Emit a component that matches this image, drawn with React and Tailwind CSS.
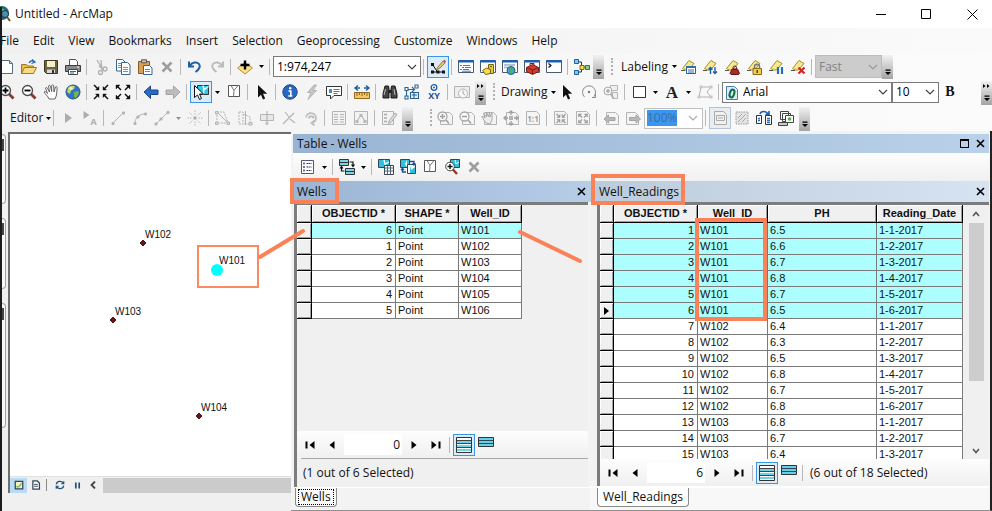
import { clsx } from 'clsx';

const WELLS = [
  { id: 6, shape: 'Point', well: 'W101' },
  { id: 1, shape: 'Point', well: 'W102' },
  { id: 2, shape: 'Point', well: 'W103' },
  { id: 3, shape: 'Point', well: 'W104' },
  { id: 4, shape: 'Point', well: 'W105' },
  { id: 5, shape: 'Point', well: 'W106' },
];

const READINGS = [
  [1, 'W101', '6.5', '1-1-2017'],
  [2, 'W101', '6.6', '1-2-2017'],
  [3, 'W101', '6.7', '1-3-2017'],
  [4, 'W101', '6.8', '1-4-2017'],
  [5, 'W101', '6.7', '1-5-2017'],
  [6, 'W101', '6.5', '1-6-2017'],
  [7, 'W102', '6.4', '1-1-2017'],
  [8, 'W102', '6.3', '1-2-2017'],
  [9, 'W102', '6.5', '1-3-2017'],
  [10, 'W102', '6.8', '1-4-2017'],
  [11, 'W102', '6.7', '1-5-2017'],
  [12, 'W102', '6.8', '1-6-2017'],
  [13, 'W103', '6.8', '1-1-2017'],
  [14, 'W103', '6.7', '1-2-2017'],
  [15, 'W103', '6.4', '1-3-2017'],
];

const MENUS = ['File', 'Edit', 'View', 'Bookmarks', 'Insert', 'Selection', 'Geoprocessing', 'Customize', 'Windows', 'Help'];

/* ---------- icon fragments ---------- */

const g = '#b4b4b4';

const tag = (
  <>
    <path d="M2.5 9.5 9 1.5l5 3-5.5 6.5H5z" fill="#f3e27a" stroke="#a8922c" />
    <path d="M5 9l5-6M7 10l5-6" stroke="#fff8c8" strokeWidth=".8" />
    <path d="M1 11.5h4" stroke="#555" />
  </>
);

const windowFrame = (
  <>
    <path d="M.5 1.5h15v12H.5z" fill="#fff" stroke="#4a5a70" />
    <path d="M.5 1h15v2.5H.5z" fill="#1d5fae" />
  </>
);

const greyPage = <path d="M3.5 2.5h9l3 3v9h-12z" fill="#f4f4f4" stroke={g} />;

const ICONS = {
  newDoc: <path d="M2.5 1.5h8l3 3v10h-11zM10.5 1.5v3h3" fill="#fff" stroke="#5b6b80" />,
  open: (
    <>
      <path d="M.5 14.5v-9h5l1 1.5h6v7.500z" fill="#e6bf52" stroke="#a37a1e" />
      <path d="M.5 14.500 3.500 8.500h12l-3 6z" fill="#f8dc84" stroke="#a37a1e" />
      <path d="M8 4c1-2 3-2.500 5-1.500M11 .5l3 2.500-3.500 1.500" fill="none" stroke="#1d6bb5" strokeWidth="1.300" />
    </>
  ),
  save: (
    <>
      <path d="M1.500 1.500h13v13h-11l-2-2z" fill="#6b6440" stroke="#3b3722" />
      <path d="M4 2h8v6H4z" fill="#f3efcf" />
      <path d="M4 10.500h8V14H4z" fill="#d9d9d9" />
      <path d="M9 11h2v3H9z" fill="#333" />
    </>
  ),
  print: (
    <>
      <path d="M4.500 6V.5h6l2 2V6" fill="#fff" stroke="#555" />
      <path d="M.5 6.500h15v6H.5z" fill="#8a8a8a" stroke="#3c3c3c" />
      <path d="M3.500 10.500h9v5h-9z" fill="#fff" stroke="#444" />
      <path d="M5 12.500h6M5 14h4" stroke="#1d6bb5" />
      <path d="M12 8h2" stroke="#fff" />
    </>
  ),
  cut: (
    <g fill="none" stroke="#b0b0b0" strokeWidth="1.300">
      <path d="M4 1l6 10M8 1l1 10M6 7l5 4" />
      <circle cx="12" cy="10" r="2" />
      <circle cx="7.500" cy="13.500" r="2" />
    </g>
  ),
  copy: (
    <>
      <path d="M1.500.5h6l2.500 2.500v9H1.500z" fill="#fff" stroke="#3a6590" />
      <path d="M6.500 3.500h6l2.500 2.500v9.500H6.500z" fill="#fff" stroke="#3a6590" />
      <path d="M8 8.500h5M8 10.500h5M8 12.500h5M3 4.500h3M3 6.500h3M3 8.500h3" stroke="#5b9bd0" />
    </>
  ),
  paste: (
    <>
      <path d="M1.500 2.500h11v12h-11z" fill="#d9a05a" stroke="#8a5a1e" />
      <path d="M4.500.8h5v3h-5z" fill="#c8c8c8" stroke="#555" />
      <path d="M6.500 6.500h6l2.500 2.500v6.500H6.500z" fill="#fff" stroke="#3a6590" />
      <path d="M8 10.500h5M8 12.500h5" stroke="#4a90d0" />
    </>
  ),
  deleteX: <path d="M3.500 3.500l9 9M12.500 3.500l-9 9" stroke="#9e9e9e" strokeWidth="2.600" />,
  undo: <path d="M2 2.500v5h5M2.500 7C5 3 10 2.500 12 5s0 5.500-3.500 8" fill="none" stroke="#1d5fa5" strokeWidth="2" />,
  redo: <path d="M14 2.500v5H9M13.500 7C11 3 6 2.500 4 5s0 5.500 3.500 8" fill="none" stroke="#bcbcbc" strokeWidth="2" />,
  addData: (
    <>
      <path d="M8 3.500 15.500 9 8 15 .5 9z" fill="#ffe08a" stroke="#b8912e" />
      <path d="M8 1.500v9M3.500 6h9" stroke="#000" strokeWidth="2.400" />
    </>
  ),
  editSketch: (
    <>
      <path d="M2.500 5.500l5 7.500M2 13h12" fill="none" stroke="#111" />
      <path d="M1 4h3v3H1zM1 11.500h3v3H1zM6.500 11.500h3v3h-3zM12 11.500h3v3h-3z" fill="#111" />
      <path d="M7.500 8.500 13 2l2 2-5.500 5.500-3 1z" fill="#e8c070" stroke="#8a6a2a" strokeWidth=".8" />
      <path d="M13 2l1.500-1.500 1.500 2L15 4z" fill="#c05a6a" />
    </>
  ),
  toc: (
    <>
      {windowFrame}
      <path d="M2 6.500h2M5 6.500h7M4 8.500h2M7 8.500h6M2 10.500h2M5 10.500h6M4 12.200h9" stroke="#3d7fc4" />
    </>
  ),
  catalog: (
    <>
      {windowFrame}
      <path d="M8.500 5.500h5v9h-5z" fill="#e8c832" stroke="#7a6410" />
      <path d="M2.500 11.500l4-2.500 4 1.500v4l-5 1z" fill="#f5dc4c" stroke="#7a6410" />
      <path d="M10 7.500h2" stroke="#7a6410" />
    </>
  ),
  search: (
    <>
      {windowFrame}
      <path d="M2 6h11M2 8.500h4" stroke="#9ab0c8" strokeWidth="1.500" />
      <circle cx="9" cy="11.500" r="4" fill="#4aa0d8" stroke="#235a80" />
      <path d="M7 9.500l3-1 1 3-2 3-2-2z" fill="#4caf50" />
    </>
  ),
  toolbox: (
    <>
      {windowFrame}
      <path d="M2.500 8.500l6-3 6 3v4l-6 3-6-3z" fill="#d23a30" stroke="#7c1a14" />
      <path d="M2.500 8.500l6 2.500 6-2.500M8.500 11v4" fill="none" stroke="#7c1a14" />
      <path d="M6 6V4.500h4V6" fill="none" stroke="#7c1a14" />
    </>
  ),
  python: (
    <>
      {windowFrame}
      <path d="M2.500 4.500l2.500 2-2.500 2" fill="none" stroke="#111" strokeWidth="1.200" />
    </>
  ),
  model: (
    <>
      <path d="M5 3h2.500v10H5M7.500 8H13" fill="none" stroke="#333" />
      <path d="M.5.500h4v4h-4z" fill="#8ec5f0" stroke="#1d5fa5" />
      <path d="M.5 11.500h4v4h-4z" fill="#8ec5f0" stroke="#1d5fa5" />
      <path d="M6 6.500h4v4H6z" fill="#f5e04c" stroke="#7a6a10" />
      <path d="M11.500 6.500h4v4h-4z" fill="#8ad08a" stroke="#2a7a2a" />
    </>
  ),
  labelManager: (
    <>
      {tag}
      <path d="M6.500 7.500h9v7h-9z" fill="#fff" stroke="#2c5f94" />
      <path d="M6 7h10v2H6z" fill="#2c6fb4" />
      <path d="M8 11h6M8 13h6" stroke="#2c6fb4" />
    </>
  ),
  labelPriority: (
    <>
      {tag}
      <path d="M8.500 15V8.500M6.500 10.500l2-2 2 2M13 8v6.500M11 12.500l2 2 2-2" fill="none" stroke="#1d5fa5" strokeWidth="1.400" />
    </>
  ),
  labelWeight: (
    <>
      {tag}
      <path d="M8 10h5.500l2 4.500-1 1H7l-1-1z" fill="#a82c24" stroke="#6a1410" />
      <circle cx="10.800" cy="8.800" r="1.800" fill="none" stroke="#6a1410" />
    </>
  ),
  labelLock: (
    <>
      {tag}
      <path d="M8.500 10V7.500c0-3 5-3 5 0V10" fill="none" stroke="#777" strokeWidth="1.500" />
      <path d="M7 9.500h8.500v6H7z" fill="#f0cc50" stroke="#8a6a14" />
      <path d="M11.200 11v3" stroke="#5a4408" strokeWidth="1.500" />
    </>
  ),
  labelPause: (
    <>
      {tag}
      <path d="M10 8v7M14 8v7" stroke="#2470b8" strokeWidth="2.200" />
    </>
  ),
  labelUnplaced: (
    <>
      {tag}
      <path d="M8.500 8.500l6 6M14.500 8.500l-6 6" stroke="#d02828" strokeWidth="2.200" />
    </>
  ),
  zoomIn: (
    <>
      <path d="M9.500 9.500l5 5" stroke="#8a3a2a" strokeWidth="2.800" />
      <circle cx="6.500" cy="6.500" r="5" fill="#fff" stroke="#4a4a4a" strokeWidth="1.300" />
      <path d="M6.500 3.500v6M3.500 6.500h6" stroke="#000" strokeWidth="1.800" />
    </>
  ),
  zoomOut: (
    <>
      <path d="M9.500 9.500l5 5" stroke="#8a3a2a" strokeWidth="2.800" />
      <circle cx="6.500" cy="6.500" r="5" fill="#fff" stroke="#4a4a4a" strokeWidth="1.300" />
      <path d="M3.500 6.500h6" stroke="#000" strokeWidth="1.800" />
    </>
  ),
  hand: (
    <path
      d="M6 15c-1-3-4-5-5-7 1-1 2 0 3.500 1.500L2.500 4c.5-1 1.500-.5 2 .5L6.500 8 5.500 2c.5-1 1.700-.8 2 .3L8.700 7.500V1.500c.5-1 1.800-.8 2 .2L11 8l1.500-5c.5-.8 1.800-.4 1.700.6L13.500 11c-.3 1.500-1 2.500-1.500 4z"
      fill="#fff"
      stroke="#555"
      strokeWidth=".9"
    />
  ),
  globe: (
    <>
      <circle cx="8" cy="8" r="7" fill="#2f74c8" stroke="#2a5484" />
      <path d="M3 4c2-3 6-2.500 7-1.500L9 5 6 6.500 5 10 2 8z" fill="#b8d870" />
      <path d="M9 8l4-1 1 2-3 5-2-1z" fill="#79b34a" />
      <circle cx="6" cy="4.500" r="1.800" fill="#fff" opacity=".6" />
    </>
  ),
  fixedIn: (
    <g fill="#111" stroke="#111">
      <path d="M1 1l4 4M15 1l-4 4M1 15l4-4M15 15l-4-4" strokeWidth="1.500" />
      <path d="M6 2.500V6H2.500zM10 2.500V6h3.500zM6 13.500V10H2.500zM10 13.500V10h3.500z" strokeWidth=".4" />
    </g>
  ),
  fixedOut: (
    <g fill="#111" stroke="#111">
      <path d="M2 2l4 4M14 2l-4 4M2 14l4-4M14 14l-4-4" strokeWidth="1.500" />
      <path d="M1 1v4l4-4zM15 1v4l-4-4zM1 15v-4l4 4zM15 15v-4l-4 4z" strokeWidth=".4" />
    </g>
  ),
  back: <path d="M1 8l6.500-6v4H15v4.500H7.500v4z" fill="#2a6cc4" stroke="#1a4688" />,
  forward: <path d="M15 8 8.500 2v4H1v4.500h7.500v4z" fill="#bdbdbd" stroke="#a5a5a5" />,
  selectFeatures: (
    <>
      <path d="M4.500 1.500h11v9h-11z" fill="#30c8e8" stroke="#333" />
      <path d="M10 1.500l1 4 4.500-3M11 5.500l-1 5" fill="none" stroke="#fff" strokeWidth="1.400" />
      <path d="M1.500 1.500v12l3-2.500 2 4.500 2-1-2-4.500h4z" fill="#fff" stroke="#111" />
    </>
  ),
  clearSelection: (
    <>
      <path d="M2.500 1.500h11v11h-11z" fill="#fff" stroke="#555" />
      <path d="M5 1.500l3 5 4-5M8 6.500l-.5 6" fill="none" stroke="#777" />
    </>
  ),
  arrow: <path d="M4 1v12.500l3-2.800 2 4.800 2.200-1L9 9.800h4.200z" fill="#111" />,
  info: (
    <>
      <circle cx="8" cy="8" r="7.200" fill="#2868c0" stroke="#1a4484" />
      <path d="M6.500 7h2.300v5M6.300 12h4" fill="none" stroke="#fff" strokeWidth="1.600" />
      <circle cx="8.200" cy="4.200" r="1.200" fill="#fff" />
    </>
  ),
  hyperlink: <path d="M10 1 3.500 8.500H7L4 15.500l8.500-9H9L12.500 1z" fill="#c6c6c6" stroke="#aaa" strokeWidth=".8" />,
  htmlPopup: (
    <>
      <path d="M.5 2.500h15v9H8l-3.500 3.500v-3.500h-4z" fill="#fff" stroke="#333" />
      <path d="M3 5h3v4H3z" fill="#3d8fd0" />
      <path d="M7.500 5.500h6M7.500 7.500h6M7.500 9.500h4" stroke="#3d7fc4" />
    </>
  ),
  measure: (
    <>
      <path d="M.5 8.500h15v6H.5z" fill="#f2c76a" stroke="#94681a" />
      <path d="M3 9v3M5.500 9v2M8 9v3M10.500 9v2M13 9v3" stroke="#94681a" />
      <path d="M1 4h5M10 4h5M4 1.500 1 4l3 2.500M12 1.500 15 4l-3 2.500" fill="none" stroke="#1d5fa5" strokeWidth="1.400" />
    </>
  ),
  find: (
    <>
      <path d="M3 2h3.500l.5 3v9H1v-4zM13 2H9.500L9 5v9h6v-4z" fill="#444" stroke="#1a1a1a" />
      <path d="M6.500 6h3v3h-3z" fill="#222" />
      <path d="M3.500 5l-1.500 6M12 5l1 6" stroke="#bbb" />
    </>
  ),
  findRoute: (
    <g fill="none" stroke="#2a6494" strokeWidth="1.100">
      <path d="M2.500 12V5.500h7M8 3l2.500 2.500L8 8" />
      <path d="M6.500 8.500h8v6h-8z" fill="#e8f0f8" />
      <path d="M11 1h3v3h-3zM1 12h3v3H1zM8 11h5M10 8.500v6" />
      <path d="M1 3.500h3v3H1z" fill="#fff" />
    </g>
  ),
  goToXY: (
    <>
      <circle cx="8" cy="3.500" r="2.800" fill="#fff" stroke="#1d5fa5" strokeWidth="1.300" />
      <circle cx="8" cy="3.500" r="1" fill="#1d5fa5" />
      <text x="8" y="15" textAnchor="middle" fontSize="9" fontWeight="700" fill="#1d4f8f">XY</text>
    </>
  ),
  timeSlider: (
    <>
      <path d="M.5 2.500h15v11H.5z" fill="#eee" stroke={g} />
      <circle cx="9" cy="9.500" r="4.500" fill="#f8f8f8" stroke={g} />
      <path d="M9 6.500v3l2 1.500" fill="none" stroke="#a0a0a0" />
    </>
  ),
  rotate: (
    <>
      <path d="M3.500 13A6.500 6.500 0 1 1 13 12.500M14.500 10v3.500H11" fill="none" stroke="#8a8a8a" />
      <circle cx="8" cy="8" r="1.200" fill="#777" />
    </>
  ),
  zoomSelected: (
    <>
      <path d="M7.500 1.500h7v5h-7zM9.500 8.500h5v6h-5z" fill="#f0f0f0" stroke={g} />
      <circle cx="5" cy="7" r="4" fill="#f6f6f6" stroke="#a8a8a8" />
      <path d="M5 5v4M3 7h4M7.500 10l3 4" stroke="#a8a8a8" strokeWidth="1.400" />
    </>
  ),
  rectangle: <path d="M2.500 2.500h12v11h-12z" fill="#fff" stroke="#333" />,
  letterA: (
    <text x="8" y="14" textAnchor="middle" fontFamily="Liberation Serif, serif" fontSize="17" fontWeight="700" fill="#222">A</text>
  ),
  editVertices: (
    <>
      <path d="M2 13 4 3h10l-4 5 4 5z" fill="none" stroke={g} />
      <path d="M2.500 1.500h3v3h-3zM12.500 1.500h3v3h-3zM.5 11.500h3v3h-3zM12.500 11.500h3v3h-3z" fill="#c8c8c8" />
    </>
  ),
  editTool: <path d="M5 3v10l7-5z" fill="#adadad" />,
  editAnno: (
    <>
      <path d="M1.500 1v8l6-4z" fill="#adadad" />
      <text x="11.500" y="14.500" textAnchor="middle" fontSize="9" fontWeight="700" fill="#adadad">A</text>
    </>
  ),
  segment: (
    <g fill={g} stroke={g}>
      <path d="M3 13 13 3" />
      <path d="M2 12.500h2v2H2zM12.500 2h2v2h-2z" />
    </g>
  ),
  arc: (
    <g stroke={g}>
      <path d="M3 13c0-5 4-9 10-9" fill="none" />
      <path d="M2 12.500h2v2H2zM12.500 3h2v2h-2zM5 6h2v2H5z" fill={g} />
    </g>
  ),
  trace: (
    <g stroke={g}>
      <path d="M2 14 14 2" fill="none" />
      <path d="M1 13h2v2H1zM13 1.500h2v2h-2zM6 8h2v2H6z" fill={g} />
    </g>
  ),
  point: (
    <>
      <path d="M8 .5v4M8 11.500v4M.5 8h4M11.500 8h4M2.500 2.500l3 3M13.500 2.500l-3 3M2.500 13.500l3-3M13.500 13.500l-3-3" stroke={g} strokeDasharray="1.500 1" />
      <path d="M6.500 6.500h3v3h-3z" fill="#aaa" />
    </>
  ),
  reshape: (
    <g stroke={g} fill="none">
      <path d="M2 2v11M2 2h7l4 11H2" strokeDasharray="2 1" />
      <path d="M3 3l9 9" />
      <path d="M.5 1.500h2.500v2.500H.5zM.5 12h2.500v2.500H.5zM12 12h2.500v2.500H12z" fill="#ddd" />
    </g>
  ),
  cutPolygons: (
    <g stroke={g} fill="none">
      <path d="M2 2h4v12H2zM6 4l7 3v7H6" strokeDasharray="2 1" />
      <path d="M12 12.500h3v2.500h-3z" fill="#ddd" />
      <path d="M8.500 1v14" />
    </g>
  ),
  split: (
    <>
      <path d="M1.500 4.500h13v6h-13z" fill="#e8e8e8" stroke={g} />
      <path d="M8 1v14" stroke="#aaa" />
      <path d="M6.500 12h3v3h-3z" fill="#c4c4c4" />
    </>
  ),
  splitLine: <path d="M2 14 13 3M4 2l4 5M9 9l5 4" stroke={g} fill="none" strokeWidth="1.200" />,
  rotateTool: <path d="M3 7.500a5 5 0 1 1 6 5.500M11.500 10.500 8.500 13l3 2.500M6 8.500c0-3 4.500-3 4.500 0" fill="none" stroke="#bdbdbd" strokeWidth="1.800" />,
  attributes: (
    <>
      <path d="M1.500 1.500h13v13h-13z" fill="#f2f2f2" stroke={g} />
      <path d="M3 4.500h4M9 4.500h4M3 7h4M9 7h4M3 9.500h4M9 9.500h4M3 12h4M9 12h4" stroke={g} />
    </>
  ),
  sketchProps: (
    <>
      <path d="M1.500 1.500h13v13h-13z" fill="#f2f2f2" stroke={g} />
      <path d="M4 11l4-6 4 6" fill="none" stroke="#aaa" />
      <path d="M2.500 10h3v3h-3zM6.500 4h3v3h-3zM10.500 10h3v3h-3z" fill="#b8b8b8" />
    </>
  ),
  createFeatures: (
    <>
      <path d="M1.500 1.500h11v13h-11z" fill="#f2f2f2" stroke={g} />
      <path d="M3 4.500h3M3 8h3M3 11.500h3" stroke="#aaa" strokeWidth="1.600" />
      <path d="M8 11l6-8 2 1.500-6 8-2.500 1z" fill="#ddd" stroke="#aaa" />
    </>
  ),
  pageZoomIn: (
    <>
      {greyPage}
      <circle cx="5.500" cy="6.500" r="4.500" fill="#f8f8f8" stroke="#a8a8a8" strokeWidth="1.300" />
      <path d="M5.500 4v5M3 6.500h5M9 10l3 3.500" stroke="#a0a0a0" strokeWidth="1.500" />
    </>
  ),
  pageZoomOut: (
    <>
      {greyPage}
      <circle cx="5.500" cy="6.500" r="4.500" fill="#f8f8f8" stroke="#a8a8a8" strokeWidth="1.300" />
      <path d="M3 6.500h5M9 10l3 3.500" stroke="#a0a0a0" strokeWidth="1.500" />
    </>
  ),
  pagePan: (
    <>
      {greyPage}
      <path d="M5 13C3 10 1 8 1 6l3 2-1.500-5L5.500 7l0-5 2 5 1-5 .5 5 2-4v7l-2 4z" fill="#eee" stroke="#a8a8a8" />
    </>
  ),
  pageWhole: (
    <>
      {greyPage}
      <path d="M8 1v4M8 11v4M1 8h4M11 8h4M6 3l2-2 2 2M6 13l2 2 2-2M3 6 1 8l2 2M13 6l2 2-2 2" fill="none" stroke="#a0a0a0" strokeWidth="1.300" />
      <path d="M6 6h4v4H6z" fill="#b4b4b4" />
    </>
  ),
  pageActual: (
    <>
      <path d="M1.500 1.500h10l3 3v10h-13z" fill="#f4f4f4" stroke={g} />
      <text x="8" y="12" textAnchor="middle" fontSize="8" fontWeight="700" fill="#a0a0a0">1:1</text>
    </>
  ),
  pageFixedIn: (
    <>
      <path d="M1.500 1.500h10l3 3v10h-13z" fill="#f4f4f4" stroke={g} />
      <path d="M7 4.500V7.500H4zM9 4.500V7.500h3zM7 12.500V9.500H4zM9 12.500V9.500h3z" fill="#9c9c9c" stroke="#9c9c9c" strokeWidth=".6" />
      <path d="M3.500 4l2 2M12.500 4l-2 2M3.500 13l2-2M12.500 13l-2-2" stroke="#9c9c9c" strokeWidth="1.200" />
    </>
  ),
  pageFixedOut: (
    <>
      <path d="M1.500 1.500h10l3 3v10h-13z" fill="#f4f4f4" stroke={g} />
      <path d="M3.500 4v3l3-3zM12.500 4v3l-3-3zM3.500 13v-3l3 3zM12.500 13v-3l-3 3z" fill="#9c9c9c" stroke="#9c9c9c" strokeWidth=".6" />
      <path d="M5 5.500l2 2M11 5.500l-2 2M5 11.500l2-2M11 11.500l-2-2" stroke="#9c9c9c" strokeWidth="1.200" />
    </>
  ),
  pageBack: (
    <>
      {greyPage}
      <path d="M1 9l4.500-4v2.500H12v3H5.500V13z" fill="#b8b8b8" stroke="#a4a4a4" />
    </>
  ),
  pageForward: (
    <>
      <path d="M1.500 2.500h9l3 3v9h-12z" fill="#f4f4f4" stroke={g} />
      <path d="M15.500 9 11 5v2.500H4.500v3H11V13z" fill="#b8b8b8" stroke="#a4a4a4" />
    </>
  ),
  draftMode: (
    <>
      <path d="M2.500 1.500h9l3 3v10h-12z" fill="#f0f0f0" stroke="#aaa" />
      <path d="M4.500 5.500h8v5h-8zM6 8h5" fill="none" stroke="#aaa" />
    </>
  ),
  focusFrame: (
    <>
      <path d="M2 2h12v12H2z" fill="#e4e4e4" stroke="#999" strokeDasharray="1.500 1" />
      <path d="M4 12l8-8M4 8l4-4M8 12l4-4" stroke="#aaa" />
    </>
  ),
  changeLayout: (
    <>
      <path d="M.5 5.500h5v8h-5zM9.500 5.500h6v9h-6z" fill="#fff" stroke="#333" />
      <path d="M2 8.500h2M2 10.500h2M11 8.500h3M11 10.500h3M11 12.500h3" stroke="#2c74b8" strokeWidth="1.300" />
      <path d="M4 4c1-3 6-3.500 8 0M13 1v3.500H9.500" fill="none" stroke="#1d5fa5" strokeWidth="1.600" />
    </>
  ),
  pageSeries: (
    <>
      <path d="M2.500 1.500h8v8h-8zM4.500 3.500h8v8h-8z" fill="#fff" stroke="#444" />
      <path d="M7.500 5.500h8v7h-8z" fill="#fff" stroke="#444" />
      <circle cx="11.500" cy="9" r="1.800" fill="#5aa84c" />
      <path d="M.5 12.500h9v3h-9z" fill="#c8ccd0" stroke="#444" />
    </>
  ),
  tableOptions: (
    <>
      <path d="M1.500 1.500h12v13h-12z" fill="#fff" stroke="#557" />
      <path d="M6.500 4.500h5M6.500 8h5M6.500 11.500h5" stroke="#336" strokeDasharray="1.500 .5" />
      <path d="M3 3.500h2v2H3zM3 7h2v2H3zM3 10.500h2v2H3z" fill="#6a7a98" />
    </>
  ),
  relatedTables: (
    <>
      <path d="M.5.500h9v6h-9z" fill="#7fd4e4" stroke="#333" />
      <path d="M6.500 9.500h9v6h-9z" fill="#7fd4e4" stroke="#333" />
      <path d="M1 3.500h8M7 12.500h8" stroke="#333" />
      <path d="M10.500 3H14v4M12.500 5.500 14 7.500l1.500-2M5.500 12H2.500V8M1 9.500 2.500 7.500 4 9.500" fill="none" stroke="#111" strokeWidth="1.200" />
    </>
  ),
  selectByAttr: (
    <>
      <path d="M.5.500h11v8H.5z" fill="#30c0dc" stroke="#345" />
      <path d="M6 1l1 4 4-2" fill="none" stroke="#fff" strokeWidth="1.300" />
      <path d="M6.500 6.500h9v9h-9z" fill="#fff" stroke="#345" />
      <path d="M6.500 9h9M6.500 12h9M9.500 7v8M12.500 7v8" stroke="#567" />
    </>
  ),
  switchSelection: (
    <>
      <path d="M.5.500h9v8h-9z" fill="#30c0dc" stroke="#345" />
      <path d="M7 1v7l-2-3z" fill="#fff" />
      <path d="M7.500 5.500h8v9h-8z" fill="#fff" stroke="#345" />
      <path d="M10 6l1 5 4-3v6h-5z" fill="#30c0dc" />
      <path d="M10 2.500h4V6M12.500 4.500 14 6l1.500-1.500M6 13H2.500V9.500M1 11l1.500-1.500L4 11" fill="none" stroke="#1d4f95" strokeWidth="1.400" />
    </>
  ),
  zoomToSelected: (
    <>
      <path d="M6.500.500h9v8h-9z" fill="#30c0dc" stroke="#345" />
      <path d="M11 1l1 4 3-2" fill="none" stroke="#fff" />
      <path d="M8.500 10l4.500 5" stroke="#8a3a2a" strokeWidth="2.400" />
      <circle cx="6" cy="7.500" r="4.300" fill="#fff" stroke="#444" />
      <path d="M6 5v5M3.500 7.500h5" stroke="#111" strokeWidth="1.400" />
    </>
  ),
  first: <path d="M3.500 4.500h2v7h-2zM12.500 4v8l-5-4z" fill="#000" />,
  prev: <path d="M10.500 4v8l-5-4z" fill="#000" />,
  next: <path d="M5.500 4v8l5-4z" fill="#000" />,
  last: <path d="M10.500 4.500h2v7h-2zM3.500 4v8l5-4z" fill="#000" />,
  showAll: (
    <>
      <path d="M.5.500h15v15H.5z" fill="#fff" stroke="#333" />
      <path d="M1 5h14M1 9h14M1 13h14" stroke="#6fd3e8" strokeWidth="2" />
      <path d="M1 3.500h14M1 6.500h14M1 10.500h14" stroke="#444" />
    </>
  ),
  showSelected: (
    <>
      <path d="M.5.500h15v9H.5z" fill="#62d3ea" stroke="#333" />
      <path d="M1 3.500h14M1 6.500h14" stroke="#345" />
    </>
  ),
  dataView: (
    <>
      <path d="M2 2h12v12H2z" fill="#f4f0c0" stroke="#345" strokeWidth="2" />
      <path d="M4 12V9l3 1 5-6v3l-4 5z" fill="#76b06a" />
    </>
  ),
  layoutView: (
    <>
      <path d="M3 1.500h7l3.500 3.500v9.500H3z" fill="#fff" stroke="#345" strokeWidth="2" />
      <path d="M5 7h6M5 10h6" stroke="#345" strokeWidth="1.500" />
    </>
  ),
  refresh: <path d="M2 7c1-6 9-6 11-2M14 2v4h-4M14 9c-1 6-9 6-11 2M2 14v-4h4" fill="none" stroke="#24507c" strokeWidth="1.900" />,
  pause: <path d="M5 2.500v11M11 2.500v11" stroke="#24507c" strokeWidth="3" />,
};

/* ---------- toolbar primitives ---------- */

function Icon({ name, size = 'size-4' }) {
  return (
    <svg viewBox="0 0 16 16" className={clsx('shrink-0 overflow-visible', size)} aria-hidden="true">
      {ICONS[name]}
    </svg>
  );
}

function Tool({ name, active, muted }) {
  return (
    <button
      type="button"
      aria-label={name}
      className={clsx(
        'flex h-[22px] w-[22px] shrink-0 items-center justify-center',
        active && 'border border-[#3c94e4] bg-[#dcebfa]',
        muted && 'border border-[#b4c4d4] bg-[#e8edf2]'
      )}
    >
      <Icon name={name} />
    </button>
  );
}

const Tools = ({ names }) => names.map((name) => <Tool key={name} name={name} />);

function Sep() {
  return <span className="mx-[2px] h-4 w-[2px] shrink-0 border-l border-[#b8b8b8]" />;
}

function Caret({ dim }) {
  return (
    <svg viewBox="0 0 5 3" className="h-[3px] w-[5px] shrink-0" aria-hidden="true">
      <path d="M0 0h5L2.500 3z" fill={dim ? '#909090' : '#000'} />
    </svg>
  );
}

function DropArrow({ dim }) {
  return (
    <button type="button" aria-label="More" className="flex h-[22px] w-[11px] shrink-0 items-center justify-center">
      <Caret dim={dim} />
    </button>
  );
}

function Grip() {
  return <span className="h-4 w-0 shrink-0 border-l-2 border-dotted border-[#b0b0b0]" />;
}

function Overflow({ more }) {
  return (
    <button
      type="button"
      aria-label="Toolbar options"
      className="flex h-6 w-[11px] shrink-0 flex-col items-center justify-end self-end bg-linear-to-b from-[#f2f2f2] to-[#a4a4a4] pb-[3px]"
    >
      <svg viewBox="0 0 8 18" className="h-[18px] w-2" aria-hidden="true">
        {more && <path d="M0 0l2.500 2L0 4zM4 0l2.500 2L4 4z" fill="#000" />}
        <path d="M1.500 11.500h5v1.200h-5zM1 14h6l-3 3z" fill="#000" />
      </svg>
    </button>
  );
}

function Chevron({ className }) {
  return (
    <svg viewBox="0 0 10 6" className={clsx('pointer-events-none absolute top-1/2 h-[6px] w-[10px] -translate-y-1/2', className)} aria-hidden="true">
      <path d="M1 1l4 4 4-4" fill="none" stroke="currentColor" strokeWidth="1.200" />
    </svg>
  );
}

function Combo({ label, value, disabled, icon, className }) {
  return (
    <div className={clsx('relative shrink-0', className)}>
      <select
        aria-label={label}
        disabled={disabled}
        className={clsx(
          'h-full w-full appearance-none border pr-5 leading-4',
          icon ? 'pl-5' : 'pl-[3px]',
          disabled ? 'border-[#bdbdbd] bg-[#cccccc] text-[#838383]' : 'border-[#7a7a7a] bg-white text-black'
        )}
      >
        <option>{value}</option>
      </select>
      {icon}
      <Chevron className={clsx('right-1', disabled ? 'text-[#9a9a9a]' : 'text-[#444]')} />
    </div>
  );
}

/* ---------- top of the window ---------- */

function TitleBar() {
  return (
    <header className="flex h-7 shrink-0 items-center bg-white">
      <svg viewBox="0 0 16 16" className="-ml-[5px] size-4" aria-hidden="true">
        <circle cx="7" cy="7" r="7" fill="#1f6a70" />
        <path d="M4 2l5 1 3 5-4 3-3-4z" fill="#68b070" />
        <circle cx="10" cy="8" r="3.500" fill="#4a90a8" stroke="#234" />
        <path d="M12 11l3 4" stroke="#7a4a20" strokeWidth="2" />
      </svg>
      <h1 className="ml-1 flex-1 text-xs">Untitled - ArcMap</h1>
      <div className="flex items-center pr-[14px] text-black">
        <button type="button" aria-label="Minimize" className="w-[46px]">
          <svg viewBox="0 0 11 11" className="mx-auto size-[11px]"><path d="M0 5.500h10" stroke="currentColor" /></svg>
        </button>
        <button type="button" aria-label="Maximize" className="w-[45px]">
          <svg viewBox="0 0 11 11" className="mx-auto size-[11px]"><path d="M.5.500h9v9h-9z" fill="none" stroke="currentColor" /></svg>
        </button>
        <button type="button" aria-label="Close" className="ml-[18px] w-[11px]">
          <svg viewBox="0 0 11 11" className="size-[11px]"><path d="M.5.500l10 10M10.500.500l-10 10" stroke="currentColor" /></svg>
        </button>
      </div>
    </header>
  );
}

function MenuBar() {
  return (
    <nav className="flex h-[26px] shrink-0 items-center gap-[14px] bg-linear-to-r from-[#f0f0f0] to-[#fafafa]">
      {MENUS.map((menu) => (
        <button type="button" key={menu}>{menu}</button>
      ))}
    </nav>
  );
}

function StandardToolbar() {
  return (
    <div className="-ml-1 flex h-[25px] shrink-0 items-center">
      <Tools names={['newDoc', 'open', 'save', 'print']} />
      <Sep />
      <Tools names={['cut', 'copy', 'paste', 'deleteX']} />
      <Sep />
      <Tools names={['undo', 'redo']} />
      <Sep />
      <Tool name="addData" />
      <DropArrow />
      <Sep />
      <Combo label="Map scale" value="1:974,247" className="h-[21px] w-[148px]" />
      <Sep />
      <Tool name="editSketch" active />
      <Sep />
      <Tools names={['toc', 'catalog', 'search', 'toolbox', 'python']} />
      <Sep />
      <Tool name="model" />
      <Overflow />
      <span className="ml-[7px]"><Grip /></span>
      <button type="button" className="ml-[8px] flex w-[56px] items-center justify-between">
        Labeling
        <Caret />
      </button>
      <Tools names={['labelManager', 'labelPriority', 'labelWeight', 'labelLock', 'labelPause', 'labelUnplaced']} />
      <Sep />
      <Combo label="Label engine quality" value="Fast" disabled className="h-[23px] w-[67px]" />
      <Overflow />
    </div>
  );
}

function ToolsToolbar() {
  return (
    <div className="-ml-1 flex h-[26px] shrink-0 items-center">
      <Tools names={['zoomIn', 'zoomOut', 'hand', 'globe']} />
      <Sep />
      <Tools names={['fixedIn', 'fixedOut']} />
      <Sep />
      <Tools names={['back', 'forward']} />
      <Sep />
      <Tool name="selectFeatures" active />
      <DropArrow />
      <Tool name="clearSelection" />
      <Sep />
      <Tool name="arrow" />
      <Sep />
      <Tools names={['info', 'hyperlink', 'htmlPopup']} />
      <Sep />
      <Tool name="measure" />
      <Sep />
      <Tools names={['find', 'findRoute', 'goToXY']} />
      <Sep />
      <Tool name="timeSlider" />
      <span className="w-[2px]" />
      <Overflow more />
      <span className="ml-[7px]"><Grip /></span>
      <button type="button" className="ml-[6px] flex w-[55px] items-center justify-between">
        Drawing
        <Caret />
      </button>
      <Tools names={['arrow', 'rotate', 'zoomSelected']} />
      <Sep />
      <Tool name="rectangle" />
      <DropArrow />
      <Tool name="letterA" />
      <DropArrow />
      <Tool name="editVertices" />
      <Sep />
      <Combo
        label="Font"
        value="Arial"
        className="h-[21px] w-[170px]"
        icon={
          <svg viewBox="0 0 14 14" className="pointer-events-none absolute top-1 left-[3px] size-[14px]" aria-hidden="true">
            <path d="M1.500.500h8l3 3v10h-11z" fill="#dcecfa" stroke="#4a7ab0" />
            <ellipse cx="7" cy="7.500" rx="2.200" ry="4" transform="rotate(18 7 7.500)" fill="none" stroke="#107040" strokeWidth="2" />
          </svg>
        }
      />
      <Combo label="Font size" value="10" className="h-[21px] w-[47px]" />
      <button type="button" aria-label="Bold" className="w-[22px] font-['Liberation_Serif',serif] text-sm font-bold">B</button>
      <span className="flex-1" />
      <Overflow more />
    </div>
  );
}

function EditorToolbar() {
  return (
    <div className="flex h-[26px] shrink-0 items-center">
      <Grip />
      <button type="button" className="ml-2 flex w-[41px] items-center justify-between">
        Editor
        <Caret />
      </button>
      <Sep />
      <Tools names={['editTool', 'editAnno']} />
      <Sep />
      <Tools names={['segment', 'arc', 'trace']} />
      <DropArrow dim />
      <Tool name="point" />
      <Sep />
      <Tools names={['reshape', 'cutPolygons', 'split', 'splitLine', 'rotateTool']} />
      <Sep />
      <Tools names={['attributes', 'sketchProps']} />
      <Sep />
      <Tool name="createFeatures" />
      <span className="w-[2px]" />
      <Overflow />
      <span className="ml-[17px]"><Grip /></span>
      <span className="w-[2px]" />
      <Tools names={['pageZoomIn', 'pageZoomOut', 'pagePan', 'pageWhole', 'pageActual']} />
      <Sep />
      <Tools names={['pageFixedIn', 'pageFixedOut']} />
      <Sep />
      <Tools names={['pageBack', 'pageForward']} />
      <div className="relative flex h-[21px] w-[59px] shrink-0 items-center border border-[#c0c0c0] bg-white pl-[2px] text-[#ababab]">
        <input aria-label="Page zoom" defaultValue="100%" className="h-4 w-[30px] bg-[#3a96f0] leading-4 text-[#3f6e9c] outline-none" />
        <Chevron className="right-1" />
      </div>
      <Sep />
      <Tool name="draftMode" muted />
      <Tools names={['focusFrame', 'changeLayout', 'pageSeries']} />
      <span className="w-[2px]" />
      <Overflow />
    </div>
  );
}

/* ---------- map ---------- */

function WellPoint({ label, className }) {
  return (
    <div className={clsx('absolute', className)}>
      <svg viewBox="0 0 6 6" className="size-[6px]" aria-hidden="true">
        <path d="M3 0l3 3-3 3-3-3z" fill="#701018" stroke="#200" strokeWidth=".8" />
      </svg>
      <span className="absolute bottom-[5px] left-[5px] font-['Liberation_Sans',Arial,sans-serif] text-[10px]">{label}</span>
    </div>
  );
}

function MapPane() {
  return (
    <div className="flex w-[291px] shrink-0">
      <div className="flex w-2 shrink-0 flex-col gap-[14px] pt-[3px]">
        <span className="h-[70px] w-[6px] rounded-r border border-l-0 border-[#a0a0a0] bg-[#f8f8f8] pt-1">
          <span className="block h-3 w-1 border-2 border-l-0 border-[#444]" />
        </span>
        <span className="h-[71px] w-[6px] rounded-r border border-l-0 border-[#a0a0a0] bg-[#f8f8f8] pt-1">
          <span className="block h-3 w-1 border-2 border-l-0 border-[#444]" />
        </span>
        <span className="h-[125px] w-[6px] rounded-r border border-l-0 border-[#a0a0a0] bg-[#f8f8f8] pt-1">
          <span className="block h-3 w-1 border-2 border-l-0 border-[#444]" />
        </span>
      </div>
      <div className="mt-[1px] mb-[18px] flex flex-1 flex-col border-t-2 border-l-2 border-[#6e6e6e]">
        <div className="relative flex-1 bg-white">
          <WellPoint label="W102" className="top-[106px] left-[130px]" />
          <WellPoint label="W103" className="top-[183px] left-[100px]" />
          <WellPoint label="W104" className="top-[279px] left-[186px]" />
          <div className="absolute top-[111px] left-[187px] h-[43px] w-[62px] border-2 border-[#f98a62]">
            <span className="absolute top-[17px] left-3 size-3 rounded-full bg-[#00ffff]" />
            <span className="absolute top-[7px] left-[20px] font-['Liberation_Sans',Arial,sans-serif] text-[10px]">W101</span>
          </div>
        </div>
        <div className="flex h-[17px] items-center border-t border-[#e0e0e0] bg-[#f0f0f0]">
          <button type="button" aria-label="Data view" className="flex h-[15px] w-[17px] items-center justify-center bg-[#b9dcf6]">
            <Icon name="dataView" size="size-[10px]" />
          </button>
          <button type="button" aria-label="Layout view" className="flex w-[17px] justify-center">
            <Icon name="layoutView" size="size-[10px]" />
          </button>
          <span className="mx-[2px] h-3 border-l border-[#888]" />
          <button type="button" aria-label="Refresh" className="flex w-[22px] justify-center">
            <Icon name="refresh" size="size-[10px]" />
          </button>
          <button type="button" aria-label="Pause drawing" className="flex w-[12px] justify-center">
            <Icon name="pause" size="size-[9px]" />
          </button>
          <button type="button" aria-label="Scroll left" className="flex w-[20px] justify-center">
            <svg viewBox="0 0 6 8" className="h-2 w-[6px]"><path d="M5 .5 1.500 4 5 7.500" fill="none" stroke="#444" strokeWidth="1.800" /></svg>
          </button>
          <span className="h-[15px] flex-1 bg-[#cbcbcb]" />
        </div>
      </div>
    </div>
  );
}

/* ---------- attribute tables ---------- */

function HeadCell({ className, children }) {
  return (
    <th scope="col" className={clsx('h-[18px] whitespace-nowrap border-r border-b border-black bg-[#f0f0f0] p-0 text-center font-bold shadow-[inset_1px_1px_0_#fff,inset_-1px_-1px_0_#a0a0a0]', className)}>
      {children}
    </th>
  );
}

function Cell({ right, children }) {
  return <td className={clsx('h-4 border-r border-b border-[#7a7a7a] py-0 leading-[15px]', right ? 'pr-[3px] text-right' : 'pl-[2px]')}>{children}</td>;
}

function RowHandle({ current }) {
  return (
    <td className="h-4 border-r border-b border-black bg-[#f0f0f0] p-0 shadow-[inset_1px_1px_0_#fff,inset_-1px_-1px_0_#a0a0a0]">
      {current && <svg viewBox="0 0 5 8" className="mx-auto h-2 w-[5px]"><path d="M0 0v8l5-4z" fill="#000" /></svg>}
    </td>
  );
}

const GRID = "table-fixed border-separate border-spacing-0 font-['Liberation_Sans',Arial,sans-serif] text-[11px]";

function WellsTable() {
  return (
    <table className={clsx(GRID, 'w-[225px]')}>
      <thead>
        <tr>
          <HeadCell className="w-[15px]" />
          <HeadCell className="w-[84px]">OBJECTID *</HeadCell>
          <HeadCell className="w-[63px]">SHAPE *</HeadCell>
          <HeadCell className="w-[63px]">Well_ID</HeadCell>
        </tr>
      </thead>
      <tbody>
        {WELLS.map((row, i) => (
          <tr key={row.id} className={i === 0 ? 'bg-[#adfefe]' : 'bg-white'}>
            <RowHandle />
            <Cell right>{row.id}</Cell>
            <Cell>{row.shape}</Cell>
            <Cell>{row.well}</Cell>
          </tr>
        ))}
      </tbody>
    </table>
  );
}

function ReadingsTable() {
  return (
    <table className={clsx(GRID, 'w-[363px]')}>
      <thead>
        <tr>
          <HeadCell className="w-[14px]" />
          <HeadCell className="w-[84px]">OBJECTID *</HeadCell>
          <HeadCell className="w-[70px]">Well_ID</HeadCell>
          <HeadCell className="w-[109px]">PH</HeadCell>
          <HeadCell className="w-[86px]">Reading_Date</HeadCell>
        </tr>
      </thead>
      <tbody>
        {READINGS.map(([id, well, ph, date]) => (
          <tr key={id} className={id <= 6 ? 'bg-[#adfefe]' : 'bg-white'}>
            <RowHandle current={id === 6} />
            <Cell right>{id}</Cell>
            <Cell>{well}</Cell>
            <Cell>{ph}</Cell>
            <Cell>{date}</Cell>
          </tr>
        ))}
      </tbody>
    </table>
  );
}

function CloseX() {
  return (
    <button type="button" aria-label="Close" className="flex w-4 justify-center">
      <svg viewBox="0 0 9 9" className="size-[9px]"><path d="M1 1l7 7M8 1 1 8" stroke="#000" strokeWidth="1.600" /></svg>
    </button>
  );
}

function RecordNav({ label, value, children }) {
  return (
    <div className="flex h-[27px] shrink-0 items-center bg-linear-to-b from-[#fdfdfd] to-[#f0f0f0] pl-[2px]">
      <Tools names={['first', 'prev']} />
      <input aria-label={label} defaultValue={value} className="ml-[1px] h-[21px] w-[58px] bg-white pr-[2px] text-right outline-none" />
      <span className="w-[1px]" />
      <Tools names={['next', 'last']} />
      <Sep />
      <Tool name="showAll" active />
      <Tool name="showSelected" />
      {children}
    </div>
  );
}

function WellsPane() {
  return (
    <section className="flex w-[297px] shrink-0 flex-col">
      <div className="flex h-[21px] shrink-0 items-center justify-between bg-linear-to-r from-[#9bb5d3] to-[#b6cde8] pr-[1px] pl-1">
        <h3>Wells</h3>
        <CloseX />
      </div>
      <div className="mr-[2px] ml-[1px] flex min-h-0 flex-1 flex-col border-t-[3px] border-l-[3px] border-[#7c7c7c] bg-[#f0f0f0]">
        <div className="min-h-0 flex-1 overflow-hidden">
          <WellsTable />
        </div>
        <RecordNav label="Wells record" value="0" />
        <p className="ml-1 flex h-[29px] shrink-0 items-center border-t border-[#a8a8a8] pl-[2px]">(1 out of 6 Selected)</p>
      </div>
      <div className="h-[23px] shrink-0 border-t border-white pl-[2px]">
        <button type="button" className="block h-[19px] rounded-b border border-t-0 border-[#8a8a8a] bg-[#fafafa] px-[2px]">
          <span className="block border border-dotted border-black px-[2px] leading-[14px]">Wells</span>
        </button>
      </div>
    </section>
  );
}

function ReadingsPane() {
  return (
    <section className="flex min-w-0 flex-1 flex-col">
      <div className="flex h-[21px] shrink-0 items-center justify-between bg-linear-to-r from-[#bccbdb] to-[#d6e3f1] pr-[1px] pl-[9px]">
        <h3>Well_Readings</h3>
        <CloseX />
      </div>
      <div className="ml-[7px] flex min-h-0 flex-1 flex-col border-t-[3px] border-l-[3px] border-[#7c7c7c] bg-[#f0f0f0]">
        <div className="flex min-h-0 flex-1 justify-between overflow-hidden">
          <ReadingsTable />
          <div className="mr-[5px] flex w-4 flex-col items-center">
            <svg viewBox="0 0 8 18" className="h-[18px] w-2" aria-hidden="true"><path d="M1 11l3-3.500L7 11" fill="none" stroke="#555" strokeWidth="1.600" /></svg>
            <span className="h-[158px] w-[15px] bg-[#cdcdcd]" />
            <span className="flex-1" />
            <svg viewBox="0 0 8 16" className="h-4 w-2" aria-hidden="true"><path d="M1 6l3 3.500L7 6" fill="none" stroke="#555" strokeWidth="1.600" /></svg>
          </div>
        </div>
        <RecordNav label="Well readings record" value="6">
          <Sep />
          <p className="ml-1 whitespace-nowrap">(6 out of 18 Selected)</p>
        </RecordNav>
      </div>
      <div className="h-6 shrink-0 border-t-2 border-white bg-[#f8f8f8] pl-[7px]">
        <button type="button" className="block h-[19px] rounded-b border border-t-0 border-[#8a8a8a] bg-white px-[5px]">Well_Readings</button>
      </div>
    </section>
  );
}

function TableWindow() {
  return (
    <div className="flex min-w-0 flex-1 flex-col border-r-2 border-b border-r-[#222] border-b-[#909090] bg-[#f3f3f3] pt-[3px] pr-[1px] pl-[2px]">
      <div className="flex h-[19px] shrink-0 items-center justify-between bg-linear-to-r from-[#99b4d1] to-[#b9d1ea] pr-[1px] pl-1">
        <h2>Table - Wells</h2>
        <div className="flex items-center">
          <button type="button" aria-label="Maximize" className="flex w-4 justify-center">
            <span className="h-[9px] w-[9px] border border-t-2 border-black" />
          </button>
          <CloseX />
        </div>
      </div>
      <div className="flex h-7 shrink-0 items-center bg-linear-to-b from-[#fdfdfd] to-[#f0f0f0] pl-1">
        <Tool name="tableOptions" />
        <DropArrow />
        <Sep />
        <Tool name="relatedTables" />
        <DropArrow />
        <Sep />
        <Tools names={['selectByAttr', 'switchSelection', 'clearSelection', 'zoomToSelected', 'deleteX']} />
      </div>
      <div className="flex min-h-0 flex-1">
        <WellsPane />
        <ReadingsPane />
      </div>
    </div>
  );
}

// Highlights drawn on top of the related records
function Callouts() {
  return (
    <svg className="pointer-events-none absolute inset-0 h-full w-full" fill="none" stroke="#fb8158" strokeWidth="4" aria-hidden="true">
      <path d="M292 49h45v22h-45zM593 45h90v27h-90zM697 89h68v99h-68z" />
      <path d="M260 126 303 100M520 101 580 130" strokeLinecap="round" />
    </svg>
  );
}

export default function App() {
  return (
    <div className="relative flex h-screen flex-col overflow-hidden bg-[#f0f0f0] font-['Open_Sans','Noto_Sans',sans-serif] text-xs text-[#111]">
      <TitleBar />
      <MenuBar />
      <div className="bg-linear-to-r from-[#f2f2f2] to-[#fbfbfb]">
        <StandardToolbar />
        <ToolsToolbar />
        <EditorToolbar />
      </div>
      <main className="relative flex min-h-0 flex-1">
        <MapPane />
        <TableWindow />
        <Callouts />
      </main>
      <span className="absolute top-[7px] bottom-0 left-0 w-[2px] bg-[#1c1c20]" />
    </div>
  );
}
